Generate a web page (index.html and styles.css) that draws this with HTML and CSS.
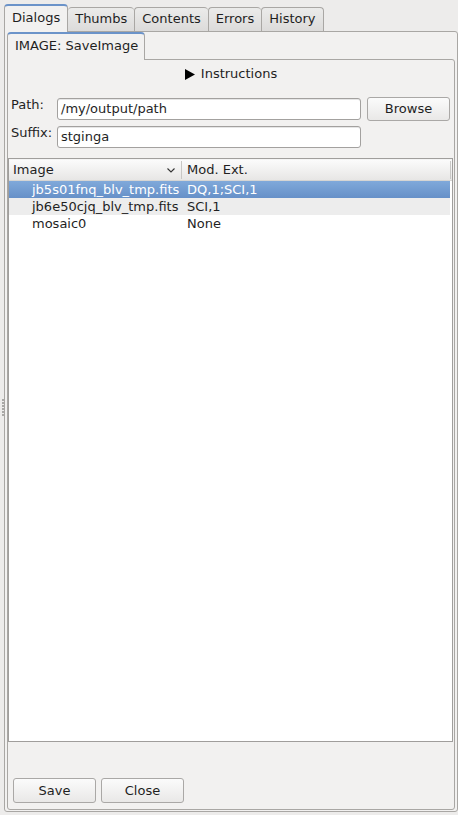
FILE: index.html
```html
<!DOCTYPE html>
<html>
<head>
<meta charset="utf-8">
<link rel="stylesheet" href="styles.css">
</head>
<body>
<div class="window">
  <div class="splitter-handle"><i></i><i></i><i></i><i></i><i></i><i></i></div>
  <div class="tabbar">
    <div class="tab selected">Dialogs</div>
    <div class="tab">Thumbs</div>
    <div class="tab">Contents</div>
    <div class="tab">Errors</div>
    <div class="tab last">History</div>
  </div>
  <div class="panel outer">
    <div class="tabbar inner-bar">
      <div class="tab selected inner-tab">IMAGE: SaveImage</div>
    </div>
    <div class="panel inner">
      <div class="instructions">
        <svg class="tri" width="10" height="11" viewBox="0 0 10 11"><polygon points="0,0 10,5.5 0,11" fill="#000"/></svg>
        <span>Instructions</span>
      </div>
      <div class="form">
        <label class="lbl">Path:</label>
        <div class="input">/my/output/path</div>
        <div class="btn browse">Browse</div>
        <label class="lbl">Suffix:</label>
        <div class="input">stginga</div>
      </div>
      <div class="table">
        <div class="thead">
          <div class="th first">Image
            <svg class="chev" width="8" height="5" viewBox="0 0 8 5"><polyline points="0.5,0.5 4,4 7.5,0.5" fill="none" stroke="#333" stroke-width="1.1"/></svg>
          </div>
          <div class="th second">Mod. Ext.</div>
        </div>
        <div class="row sel"><div class="c1">jb5s01fnq_blv_tmp.fits</div><div class="c2">DQ,1;SCI,1</div></div>
        <div class="row alt"><div class="c1">jb6e50cjq_blv_tmp.fits</div><div class="c2">SCI,1</div></div>
        <div class="row"><div class="c1">mosaic0</div><div class="c2">None</div></div>
      </div>
      <div class="buttons">
        <div class="btn">Save</div>
        <div class="btn">Close</div>
      </div>
    </div>
  </div>
</div>
</body>
</html>
```

FILE: styles.css
```css
* { box-sizing: border-box; }
html, body {
  margin: 0;
  padding: 0;
  width: 458px;
  height: 815px;
  overflow: hidden;
  background: #edeceb;
  font-family: "DejaVu Sans", sans-serif;
  font-size: 13px;
  color: #1f1f1f;
}
.window {
  position: relative;
  height: 815px;
  padding: 4px 0 3px 4px;
  display: flex;
  flex-direction: column;
}
.splitter-handle {
  position: absolute;
  left: 2px;
  top: 399px;
  display: flex;
  flex-direction: column;
  gap: 1px;
}
.splitter-handle i {
  display: block;
  width: 2px;
  height: 2px;
  background: #a9a8a6;
}
.tabbar {
  display: flex;
  align-items: flex-end;
  height: 27px;
  position: relative;
  z-index: 2;
}
.tab {
  height: 24px;
  padding: 0 7px;
  border: 1px solid #a9a7a4;
  border-right: none;
  border-bottom: none;
  border-radius: 4px 4px 0 0;
  background: linear-gradient(#ebebea, #dcdbda);
  line-height: 22px;
  color: #1f1f1f;
  white-space: nowrap;
}
.tab.last { border-right: 1px solid #a9a7a4; }
.tab.selected {
  height: 28px;
  margin-bottom: -1px;
  border-top: 2px solid #6b93c9;
  border-right: 1px solid #a9a7a4;
  background: #f2f1f0;
  line-height: 24px;
  padding: 0 7px;
}
.tab.selected + .tab { border-left: none; }
.panel {
  border: 1px solid #a9a7a4;
  background: #f2f1f0;
}
.outer {
  flex: 1;
  display: flex;
  flex-direction: column;
  padding: 0 2px 1px 2px;
  border-radius: 0 3px 3px 3px;
}
.inner-bar {
  height: 27px;
}
.inner-tab {
  height: 28px;
  width: 138px;
  padding: 0 0 0 6px;
}
.inner {
  flex: 1;
  display: flex;
  flex-direction: column;
  border-radius: 0 3px 3px 3px;
}
.instructions {
  margin-top: 5px;
  height: 18px;
  display: flex;
  align-items: center;
  justify-content: center;
  gap: 6px;
  line-height: 18px;
}
.tri { display: block; margin-top: 1px; }
.form {
  margin-top: 14px;
  display: grid;
  grid-template-columns: 46px 304px 1fr;
  grid-template-rows: 24px 24px;
  column-gap: 0;
  row-gap: 4px;
  padding: 0 4px 0 3px;
}
.lbl {
  line-height: 16px;
  align-self: start;
}
.input {
  height: 22px;
  align-self: center;
  border: 1px solid #a3a19f;
  border-radius: 3px;
  background: #fff;
  padding: 0 3px;
  line-height: 20px;
  box-shadow: inset 0 1px 0 #e6e6e6;
}
.btn {
  height: 25px;
  width: 83px;
  border: 1px solid #aaa8a6;
  border-radius: 3px;
  background: linear-gradient(#fbfbfb, #e9e8e7);
  text-align: center;
  line-height: 23px;
}
.browse {
  height: 24px;
  width: 83px;
  margin-left: 6px;
  line-height: 22px;
}
.table {
  margin-top: 9px;
  margin-right: 1px;
  flex: 1;
  border: 1px solid #a09e9c;
  background: #fff;
}
.thead {
  display: grid;
  grid-template-columns: 173px 1fr;
  height: 22px;
  background: linear-gradient(#fbfbfb, #e7e6e5);
  border-top: 1px solid #f4f4f4;
  border-bottom: 1px solid #d6d5d3;
}
.th {
  line-height: 20px;
  position: relative;
}
.th.first {
  padding-left: 4px;
  border-right: 1px solid #c8c7c5;
  margin: 1px 0;
  line-height: 18px;
}
.chev {
  position: absolute;
  left: 158px;
  top: 7px;
}
.th.second {
  padding-left: 5px;
  border-right: 1px solid #c8c7c5;
  margin: 1px 1px 1px 0;
  line-height: 18px;
}
.row {
  display: grid;
  grid-template-columns: 173px 1fr;
  height: 17px;
  line-height: 17px;
}
.row.sel {
  background: linear-gradient(#80a9da, #6690c8);
  color: #fff;
  border-right: 2px solid #fff;
}
.row.alt { background: #ededed; border-right: 2px solid #fff; }
.c1 { padding-left: 23px; white-space: nowrap; }
.c2 { padding-left: 5px; white-space: nowrap; }
.buttons {
  margin-top: 36px;
  margin-bottom: 6px;
  padding-left: 5px;
  display: flex;
  gap: 5px;
}
```
